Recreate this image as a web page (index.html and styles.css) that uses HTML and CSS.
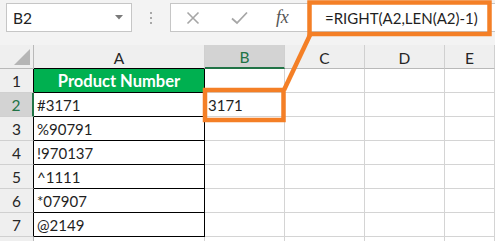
FILE: index.html
```html
<!DOCTYPE html>
<html>
<head>
<meta charset="utf-8">
<link rel="stylesheet" href="styles.css">
</head>
<body>
<div class="app">
  <div class="toolbar">
    <div class="namebox">
      <span class="nb-text">B2</span>
      <svg class="nb-arrow" width="8" height="5" viewBox="0 0 8 5"><path d="M0 0H8L4 4.5Z" fill="#7a7a7a"/></svg>
    </div>
    <div class="grip"><i></i><i></i><i></i></div>
    <div class="fbar">
      <div class="fbtns">
        <svg class="ico" width="14" height="14" viewBox="0 0 14 14"><path d="M1.5 1.5L12.5 12.5M12.5 1.5L1.5 12.5" stroke="#a6a6a6" stroke-width="1.6" fill="none"/></svg>
        <svg class="ico" width="17" height="14" viewBox="0 0 17 14"><path d="M1 7.5L6 12L16 1.5" stroke="#a6a6a6" stroke-width="1.8" fill="none"/></svg>
        <span class="fx">fx</span>
      </div>
      <div class="formula">=RIGHT(A2,LEN(A2)-1)</div>
    </div>
  </div>

  <div class="sheet">
    <div class="ch corner"><svg width="16" height="16" viewBox="0 0 16 16"><path d="M16 0V16H0Z" fill="#b5b5b5"/></svg></div>
    <div class="ch a-h">A</div>
    <div class="ch sel">B</div>
    <div class="ch">C</div>
    <div class="ch">D</div>
    <div class="ch">E</div>

    <div class="rh t">1</div>
    <div class="c a head">Product Number</div>
    <div class="c"></div><div class="c"></div><div class="c"></div><div class="c"></div>

    <div class="rh t rsel">2</div>
    <div class="c a">#3171</div>
    <div class="c b2">3171</div><div class="c"></div><div class="c"></div><div class="c"></div>

    <div class="rh t">3</div>
    <div class="c a">%90791</div>
    <div class="c"></div><div class="c"></div><div class="c"></div><div class="c"></div>

    <div class="rh t">4</div>
    <div class="c a">!970137</div>
    <div class="c"></div><div class="c"></div><div class="c"></div><div class="c"></div>

    <div class="rh t">5</div>
    <div class="c a">^1111</div>
    <div class="c"></div><div class="c"></div><div class="c"></div><div class="c"></div>

    <div class="rh t">6</div>
    <div class="c a">*07907</div>
    <div class="c"></div><div class="c"></div><div class="c"></div><div class="c"></div>

    <div class="rh t">7</div>
    <div class="c a">@2149</div>
    <div class="c"></div><div class="c"></div><div class="c"></div><div class="c"></div>

    <div class="rh"></div>
    <div class="c"></div>
    <div class="c"></div><div class="c"></div><div class="c"></div><div class="c"></div>
  </div>

  <svg class="annot" width="495" height="241" viewBox="0 0 495 241">
    <g fill="none" stroke="#f47f26" stroke-width="4.5">
      <rect x="309.5" y="2.5" width="180" height="31.5"/>
      <rect x="205" y="90" width="78.5" height="30"/>
      <path d="M310 35L284 90"/>
    </g>
  </svg>
</div>
</body>
</html>
```

FILE: styles.css
```css
* { box-sizing: border-box; }
html, body { margin: 0; padding: 0; background: #ffffff; }
.app {
  position: relative;
  width: 495px;
  height: 241px;
  overflow: hidden;
  font-family: "Lato", "Liberation Sans", sans-serif;
  color: #1f1f1f;
}
.toolbar {
  height: 45px;
  background: #f3f3f3;
  display: flex;
  align-items: flex-start;
  padding-top: 3px;
  padding-left: 6px;
}
.namebox {
  width: 126px;
  height: 29px;
  background: #fff;
  border: 1px solid #c6c6c6;
  display: flex;
  align-items: center;
  justify-content: space-between;
  padding: 0 8px 0 6px;
}
.nb-text { font-size: 15.5px; color: #222; }
.grip {
  width: 38px;
  height: 29px;
  display: flex;
  flex-direction: column;
  align-items: center;
  justify-content: center;
  gap: 3px;
}
.grip i { display: block; width: 2px; height: 2px; background: #a8a8a8; }
.fbar {
  flex: 1;
  height: 29px;
  background: #fff;
  border: 1px solid #c6c6c6;
  border-right: none;
  display: flex;
  align-items: center;
}
.fbtns {
  width: 137px;
  display: flex;
  align-items: center;
  padding-left: 15px;
}
.fbtns .ico:first-child { margin-right: 31px; }
.fbtns .ico:nth-child(2) { margin-right: 28px; }
.fx {
  font-family: "Liberation Serif", serif;
  font-style: italic;
  font-size: 18px;
  color: #555;
  letter-spacing: -0.3px;
}
.formula {
  padding-left: 17px;
  font-size: 15px;
  color: #1f1f1f;
}
.sheet {
  display: grid;
  grid-template-columns: 34px 171px 80px 80px 80px 1fr;
  grid-template-rows: 24px repeat(8, 24px);
  font-size: 15px;
}
.ch {
  background: #efefef;
  border-right: 1px solid #d0d0d0;
  border-bottom: 1px solid #b9b9b9;
  display: flex;
  align-items: center;
  justify-content: center;
  color: #262626;
  padding-top: 2px;
  font-size: 15.5px;
}
.ch.corner {
  justify-content: flex-end;
  align-items: flex-end;
  padding: 0 3px 3px 0;
  border-right-color: #b9b9b9;
}
.ch.a-h { border-bottom-color: #000; }
.ch.sel {
  background: #d3d3d3;
  color: #217346;
  border-bottom: 2px solid #217346;
}
.rh {
  background: #efefef;
  border-right: 1px solid #b9b9b9;
  border-bottom: 1px solid #d0d0d0;
  display: flex;
  align-items: center;
  justify-content: center;
  color: #262626;
  font-size: 15.5px;
}
.rh.t { border-right-color: #000; }
.rh.rsel {
  background: #d3d3d3;
  color: #217346;
  border-right: 2px solid #217346;
}
.c {
  border-right: 1px solid #d4d4d4;
  border-bottom: 1px solid #d4d4d4;
  display: flex;
  align-items: center;
  padding-left: 3px;
  white-space: nowrap;
}
.c.a {
  border-right-color: #000;
  border-bottom-color: #000;
}
.c.head {
  background: #00b050;
  color: #fff;
  font-weight: bold;
  font-size: 16.5px;
  justify-content: center;
  padding-left: 0;
}
.annot {
  position: absolute;
  left: 0;
  top: 0;
  pointer-events: none;
}
```
